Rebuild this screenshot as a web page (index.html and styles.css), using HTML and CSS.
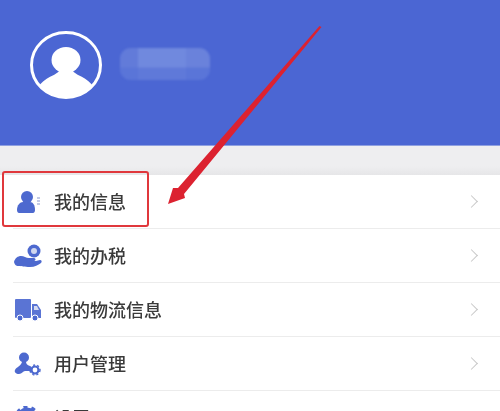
FILE: index.html
```html
<!DOCTYPE html>
<html lang="zh">
<head>
<meta charset="utf-8">
<title>我的</title>
<link rel="stylesheet" href="styles.css">
</head>
<body>
<div class="page">
  <header class="header">
    <svg class="avatar" viewBox="0 0 72 68" width="72" height="68">
      <defs><clipPath id="c"><ellipse cx="36" cy="34" rx="34" ry="32"/></clipPath></defs>
      <g clip-path="url(#c)" fill="#fff">
        <ellipse cx="36" cy="29" rx="14.5" ry="13"/>
        <path d="M30 38C29 44 16 45 9 55V70H63V55C56 45 43 44 42 38z"/>
      </g>
      <ellipse cx="36" cy="34" rx="34.5" ry="32.5" fill="none" stroke="#fff" stroke-width="3"/>
    </svg>
    <div class="name">
      <span class="name-a"></span><span class="name-b"></span><span class="name-c"></span>
    </div>
  </header>
  <div class="gap"></div>
  <ul class="list">
    <li class="row">
      <svg class="icon" viewBox="0 0 24 24" width="24" height="24">
        <circle cx="10" cy="7" r="6" fill="#4d69cf"/>
        <path d="M0 20c0-5 3-8 6-8h7c3 0 5 3 5 8 0 2-1 3-2 3H2c-1 0-2-1-2-3z" fill="#4d69cf"/>
        <path d="M20 8h3M20 11h3M20 14h3" stroke="#c3cbe6" stroke-width="1.8"/>
      </svg>
      <span class="label">我的信息</span><i class="chev"></i>
    </li>
    <li class="row">
      <svg class="icon icon-wide" viewBox="0 0 30 24" width="30" height="24">
        <circle cx="21" cy="7" r="6.5" fill="#4d69cf"/>
        <circle cx="21" cy="7" r="3" fill="#cfd6ef"/>
        <path d="M1 18c1-4 4-6 7-6 3 0 5 2 8 2h5c2 0 2 3 0 3h-6 8l4-1c2 0 2 2 1 3-3 2-6 4-11 4-6 0-8-1-11-1-2 0-4 0-5-4z" fill="#4d69cf"/>
      </svg>
      <span class="label">我的办税</span><i class="chev"></i>
    </li>
    <li class="row">
      <svg class="icon icon-wide" viewBox="0 0 30 24" width="30" height="24">
        <rect x="2" y="1" width="16" height="19" rx="1" fill="#5a74d4"/>
        <path d="M19 6h5l4 6v8h-9z" fill="#5a74d4"/>
        <path d="M21 8h3l2 4h-5z" fill="#d4daf0"/>
        <circle cx="7" cy="20" r="3" fill="#4d69cf" stroke="#fff"/>
        <circle cx="22" cy="20" r="3" fill="#4d69cf" stroke="#fff"/>
      </svg>
      <span class="label">我的物流信息</span><i class="chev"></i>
    </li>
    <li class="row">
      <svg class="icon icon-wide" viewBox="0 0 30 24" width="30" height="24">
        <circle cx="11" cy="5.500" r="5" fill="#4d69cf"/>
        <path d="M9 9h4c0 3 1 4 4 5 2 1 2 3 1 5h-6c-2 0-3 3-6 3-3 0-5-2-4-4 1-3 7-4 7-9z" fill="#4d69cf"/>
        <circle cx="22" cy="18" r="3.500" fill="none" stroke="#4d69cf" stroke-width="2.2"/>
        <circle cx="22" cy="18" r="5" fill="none" stroke="#4d69cf" stroke-width="1.400" stroke-dasharray="2 2.200"/>
      </svg>
      <span class="label">用户管理</span><i class="chev"></i>
    </li>
    <li class="row">
      <svg class="icon icon-wide" viewBox="0 0 30 24" width="30" height="24">
        <circle cx="14" cy="12" r="8" fill="none" stroke="#4d69cf" stroke-width="5"/>
        <circle cx="14" cy="12" r="11" fill="none" stroke="#4d69cf" stroke-width="3" stroke-dasharray="4 4"/>
      </svg>
      <span class="label">设置</span><i class="chev"></i>
    </li>
  </ul>
  <div class="highlight"></div>
  <svg class="arrow" viewBox="0 0 500 411" width="500" height="411">
    <path d="M321.500 27L184 194L185 198L168 204L173 188L178 188L319.500 26z" fill="#dc2230"/>
  </svg>
</div>
</body>
</html>
```
FILE: styles.css
```css
html, body { margin: 0; padding: 0; }
body {
  width: 500px;
  height: 411px;
  overflow: hidden;
  background: #fff;
  font-family: "Noto Sans CJK SC", "Liberation Sans", sans-serif;
}
.page {
  position: relative;
  width: 500px;
  height: 411px;
  overflow: hidden;
}
.header {
  height: 145px;
  background: #4b66d3;
  display: flex;
  align-items: center;
  padding: 0 0 15px 30px;
  box-sizing: border-box;
  gap: 18px;
}
.avatar { flex: none; filter: blur(0.5px); }
.name {
  width: 90px;
  height: 32px;
  margin-bottom: 2px;
  border-radius: 11px;
  overflow: hidden;
  display: flex;
  background: #5a75d8;
  filter: blur(1.2px);
}
.name-a { width: 18px; background: linear-gradient(#627bd9 60%, #5a75d8 62%); }
.name-b { width: 48px; background: linear-gradient(#7089de 60%, #5f79d9 62%); }
.name-c { flex: 1; background: linear-gradient(#6a82db 60%, #5a75d8 62%); }
.gap {
  height: 30px;
  background: linear-gradient(#eeeef0 70%, #e6e6e8);
  border-top: 1px solid #8fa0e0;
  box-sizing: border-box;
}
.list { list-style: none; margin: 0; padding: 0; background: #fff; }
.row {
  height: 54px;
  margin-left: 13px;
  padding-right: 24px;
  box-sizing: border-box;
  border-bottom: 1px solid #ececec;
  display: flex;
  align-items: center;
  filter: blur(0.45px);
}
.icon { flex: none; width: 24px; margin: 0 17px 0 4px; }
.icon-wide { width: 30px; margin: 0 11px 0 0; }
.label {
  flex: 1;
  font-size: 18px;
  font-weight: 500;
  line-height: 24px;
  margin-bottom: 2px;
  color: #3a3a3a;
}
.row .icon:not(.icon-wide) + .label { margin-left: -4px; }
.chev {
  width: 8px;
  height: 8px;
  border-top: 1.5px solid #c8c8c8;
  border-right: 1.5px solid #c8c8c8;
  transform: rotate(45deg);
}
.highlight {
  position: absolute;
  left: 2px;
  top: 171px;
  width: 147px;
  height: 56px;
  box-sizing: border-box;
  border: 2.5px solid #e0383c;
  border-radius: 3px;
}
.arrow { position: absolute; left: 0; top: 0; }
```
